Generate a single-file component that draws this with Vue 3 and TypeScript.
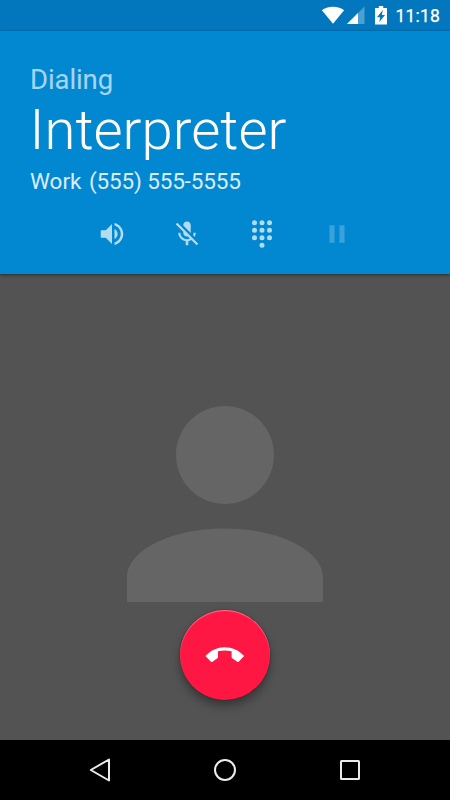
<script setup lang="ts">
interface CallAction {
  label: string
  path: string
  disabled?: boolean
}

const dots = [
  [6, 3], [12, 3], [18, 3],
  [6, 9], [12, 9], [18, 9],
  [6, 15], [12, 15], [18, 15],
  [12, 21],
].map(([x, y]) => `M${x - 2} ${y}a2 2 0 1 0 4 0a2 2 0 1 0-4 0z`).join('')

const actions: CallAction[] = [
  {
    label: 'Speaker',
    path: 'M3 9v6h4l5 5V4L7 9H3zm13.5 3c0-1.77-1.02-3.29-2.5-4.03v8.05c1.48-.73 2.5-2.25 2.5-4.02zM14 3.23v2.06c2.89.86 5 3.54 5 6.71s-2.11 5.85-5 6.71v2.06c4.01-.91 7-4.49 7-8.77s-2.99-7.86-7-8.77z',
  },
  {
    label: 'Mute',
    path: 'M19 11h-1.7c0 .74-.16 1.43-.43 2.05l1.23 1.23c.56-.98.9-2.09.9-3.28zm-4.02.17c0-.06.02-.11.02-.17V5c0-1.66-1.34-3-3-3S9 3.34 9 5v.18l5.98 5.99zM4.27 3L3 4.27l6.01 6.01V11c0 1.66 1.33 3 2.99 3 .22 0 .44-.03.65-.08l1.66 1.66c-.71.33-1.5.52-2.31.52-2.76 0-5.3-2.1-5.3-5.1H5c0 3.41 2.72 6.23 6 6.72V21h2v-3.28c.91-.13 1.77-.45 2.54-.9L19.73 21 21 19.73 4.27 3z',
  },
  { label: 'Dialpad', path: dots },
  { label: 'Hold', path: 'M6 19h4V5H6v14zm8-14v14h4V5h-4z', disabled: true },
]
</script>

<template>
  <div class="phone">
    <div class="status">
      <svg class="wifi" width="24" height="18" viewBox="0 0 24 18">
        <path d="M12 17.700L.9 4.300C3.700 2.100 7.400.700 12 .700s8.300 1.400 11.100 3.600z" />
      </svg>
      <svg class="signal" width="18" height="18" viewBox="0 0 18 18">
        <path class="dim" d="M0 18L17.500.5V18z" />
        <path d="M0 18L11 7v11z" />
      </svg>
      <svg class="battery" width="12" height="19" viewBox="0 0 12 19">
        <path fill-rule="evenodd" d="M3.800 0h4.400v2H11.500q.5 0 .5.500v15.500q0 .5-.5.500H.5q-.5 0-.5-.5V2.500Q0 2 .5 2h3.300zM7.800 4L2 11.200h3.200L4.200 16.300l5.800-7.300h-3.200z" />
      </svg>
      <span class="clock">11:18</span>
    </div>

    <header class="info">
      <div class="state">Dialing</div>
      <div class="name">Interpreter</div>
      <div class="number">
        <span>Work</span>
        <span class="digits">(555) 555-5555</span>
      </div>
      <div class="actions">
        <button v-for="a in actions" :key="a.label" :aria-label="a.label" :disabled="a.disabled" class="action">
          <svg width="30" height="30" viewBox="0 0 24 24"><path :d="a.path" /></svg>
        </button>
      </div>
    </header>

    <main class="photo">
      <svg class="person" width="294" height="294" viewBox="0 0 24 24">
        <path d="M12 12c2.210 0 4-1.790 4-4s-1.790-4-4-4-4 1.790-4 4 1.790 4 4 4zm0 2c-4.420 0-8 1.790-8 4v2h16v-2c0-2.210-3.580-4-8-4z" />
      </svg>
      <button class="hangup" aria-label="End call">
        <svg width="40" height="18" viewBox="0 0 40 18">
          <path d="M.9 9.400C6 4.300 12.500 1.200 19.800 1.200S33.600 4.300 38.700 9.400q.6.600 0 1.200L33.600 15.700q-.7.600-1.400.1L27.200 12.200q-.6-.5-.6-1.300V5.300Q19.800 3.900 13 5.300v5.600q0 .8-.6 1.300L7.400 15.800q-.7.500-1.400-.1L.9 10.600q-.6-.6 0-1.200z" />
        </svg>
      </button>
    </main>

    <nav class="nav">
      <svg width="30" height="30" viewBox="0 0 30 30"><path d="M24 4.500v21L5.800 15z" /></svg>
      <svg width="30" height="30" viewBox="0 0 30 30"><circle cx="15" cy="15" r="10" /></svg>
      <svg width="30" height="30" viewBox="0 0 30 30"><rect x="6" y="6" width="18" height="18" rx=".5" /></svg>
    </nav>
  </div>
</template>

<style>
body {
  margin: 0;
}
</style>

<style scoped>
.phone {
  display: flex;
  flex-direction: column;
  width: 450px;
  height: 800px;
  overflow: hidden;
  background: #535353;
  font-family: Roboto, "Noto Sans", sans-serif;
}

button {
  padding: 0;
  border: 0;
  background: none;
}

svg {
  display: block;
  flex: none;
}

.status {
  display: flex;
  align-items: flex-start;
  box-sizing: border-box;
  height: 31px;
  padding: 6px 0 0 321px;
  background: #0277bd;
  color: #fff;
  fill: #fff;
}

.wifi {
  margin-right: 1.500px;
}

.signal {
  margin-right: 10px;
}

.dim {
  opacity: 0.3;
}

.battery {
  margin-right: 9px;
}

.clock {
  font-size: 17.5px;
  letter-spacing: 0.2px;
  line-height: 21px;
  -webkit-text-stroke: 0.25px #fff;
}

.info {
  position: relative;
  z-index: 1;
  box-sizing: border-box;
  height: 243px;
  padding: 33px 30px 0;
  background: #0288d1;
  box-shadow: 0 1px 3px rgba(0, 0, 0, 0.5);
  color: #fff;
  white-space: nowrap;
}

.state {
  font-size: 27.5px;
  letter-spacing: -0.1px;
  line-height: 32px;
  opacity: 0.65;
}

.name {
  margin: 1px 0 0 -0.5px;
  font-size: 56.25px;
  font-weight: 300;
  line-height: 66px;
}

.number {
  display: flex;
  gap: 7.500px;
  margin-top: 5px;
  font-size: 22.5px;
  line-height: 27px;
  opacity: 0.85;
}

.digits {
  letter-spacing: -0.15px;
}

.actions {
  display: flex;
  gap: 45px;
  margin: 24px 0 0 67px;
}

.action {
  width: 30px;
  height: 30px;
  fill: #fff;
  opacity: 0.7;
}

.action:disabled {
  opacity: 0.22;
}

.photo {
  display: flex;
  flex: 1;
  flex-direction: column;
  align-items: center;
  padding-top: 82.700px;
}

.person {
  fill: #656565;
}

.hangup {
  display: grid;
  place-items: center;
  flex: none;
  width: 90px;
  height: 90px;
  margin-top: -40.700px;
  border-radius: 50%;
  background: #ff1744;
  box-shadow: 0 6px 10px rgba(0, 0, 0, 0.35), 0 0 2px rgba(0, 0, 0, 0.4), inset 0 1px 1px rgba(255, 255, 255, 0.4);
  fill: #fff;
}

.nav {
  display: flex;
  align-items: center;
  justify-content: center;
  gap: 95px;
  height: 60px;
  background: #000;
  fill: none;
  stroke: #ececec;
  stroke-width: 2;
  stroke-linejoin: round;
}
</style>
